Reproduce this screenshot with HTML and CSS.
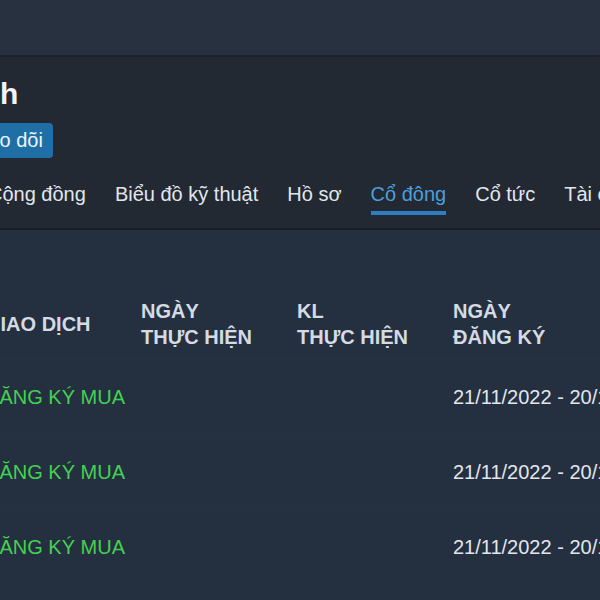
FILE: index.html
```html
<!DOCTYPE html>
<html lang="vi">
<head>
  <meta charset="UTF-8">
  <title>Cổ đông</title>
  <link rel="stylesheet" href="styles.css">
</head>
<body>

  <div class="top-bar"></div>

  <div class="stock-header">
    <h1 class="stock-title">h</h1>
    <button class="btn-follow">Theo dõi</button>

    <div class="tabs">
      <span class="tab">Cộng đồng</span>
      <span class="tab">Biểu đồ kỹ thuật</span>
      <span class="tab">Hồ sơ</span>
      <span class="tab active">Cổ đông</span>
      <span class="tab">Cổ tức</span>
      <span class="tab">Tài chính</span>
    </div>
  </div>

  <div class="content">
    <table class="trades">
      <thead>
        <tr>
          <th>GIAO DỊCH</th>
          <th>NGÀY<br>THỰC HIỆN</th>
          <th>KL<br>THỰC HIỆN</th>
          <th>NGÀY<br>ĐĂNG KÝ</th>
        </tr>
      </thead>
      <tbody>
        <tr>
          <td class="buy">ĐĂNG KÝ MUA</td>
          <td></td>
          <td></td>
          <td>21/11/2022 - 20/12/2022</td>
        </tr>
        <tr>
          <td class="buy">ĐĂNG KÝ MUA</td>
          <td></td>
          <td></td>
          <td>21/11/2022 - 20/12/2022</td>
        </tr>
        <tr>
          <td class="buy">ĐĂNG KÝ MUA</td>
          <td></td>
          <td></td>
          <td>21/11/2022 - 20/12/2022</td>
        </tr>
      </tbody>
    </table>
  </div>

</body>
</html>
```

FILE: styles.css
```css
:root {
  --bar-bg: #27313f;
  --header-bg: #222933;
  --content-bg: #243040;
  --text-light: #e2e6ec;
  --head-text: #d5dbe3;
  --blue: #4a9fdc;
  --blue-line: #2f7fc0;
  --btn-blue: #1f6fa6;
  --green: #44d052;
}

html, body {
  margin: 0;
  padding: 0;
  height: 100%;
  overflow: hidden;
  background: var(--content-bg);
  font-family: "Liberation Sans", Arial, sans-serif;
  color: var(--text-light);
}

.top-bar {
  height: 55px;
  background: var(--bar-bg);
  border-bottom: 2px solid #1d222a;
}

.stock-header {
  background: var(--header-bg);
  padding: 19px 0 13px;
  border-bottom: 2px solid #1a1f26;
}

.stock-title {
  margin: 0;
  font-size: 30px;
  font-weight: 700;
  line-height: 36px;
  color: #f2f4f7;
}

.btn-follow {
  display: block;
  margin: 11px 0 0 -45px;
  height: 35px;
  padding: 0 10px;
  border: none;
  border-radius: 4px;
  background: var(--btn-blue);
  color: #eef4fa;
  font-family: inherit;
  font-size: 20px;
}

.tabs {
  display: flex;
  gap: 29px;
  margin: 23px 0 0 -12px;
  white-space: nowrap;
}

.tab {
  font-size: 20px;
  line-height: 26px;
  padding-bottom: 4px;
  border-bottom: 4px solid transparent;
  color: var(--text-light);
}

.tab.active {
  color: var(--blue);
  border-bottom-color: var(--blue-line);
}

.content {
  padding-top: 54px;
}

.trades {
  margin-left: -15px;
  border-collapse: collapse;
  table-layout: fixed;
  width: 624px;
}

.trades th,
.trades td {
  width: 156px;
  padding: 0;
  text-align: left;
  vertical-align: middle;
  white-space: nowrap;
}

.trades th {
  font-size: 20px;
  font-weight: 700;
  line-height: 26px;
  color: var(--head-text);
  padding: 14px 0 9px;
}

.trades td {
  font-size: 20px;
  line-height: 22px;
  padding: 26px 0;
  border-top: 1px solid #27323f;
}

.trades td.buy {
  color: var(--green);
}
```
